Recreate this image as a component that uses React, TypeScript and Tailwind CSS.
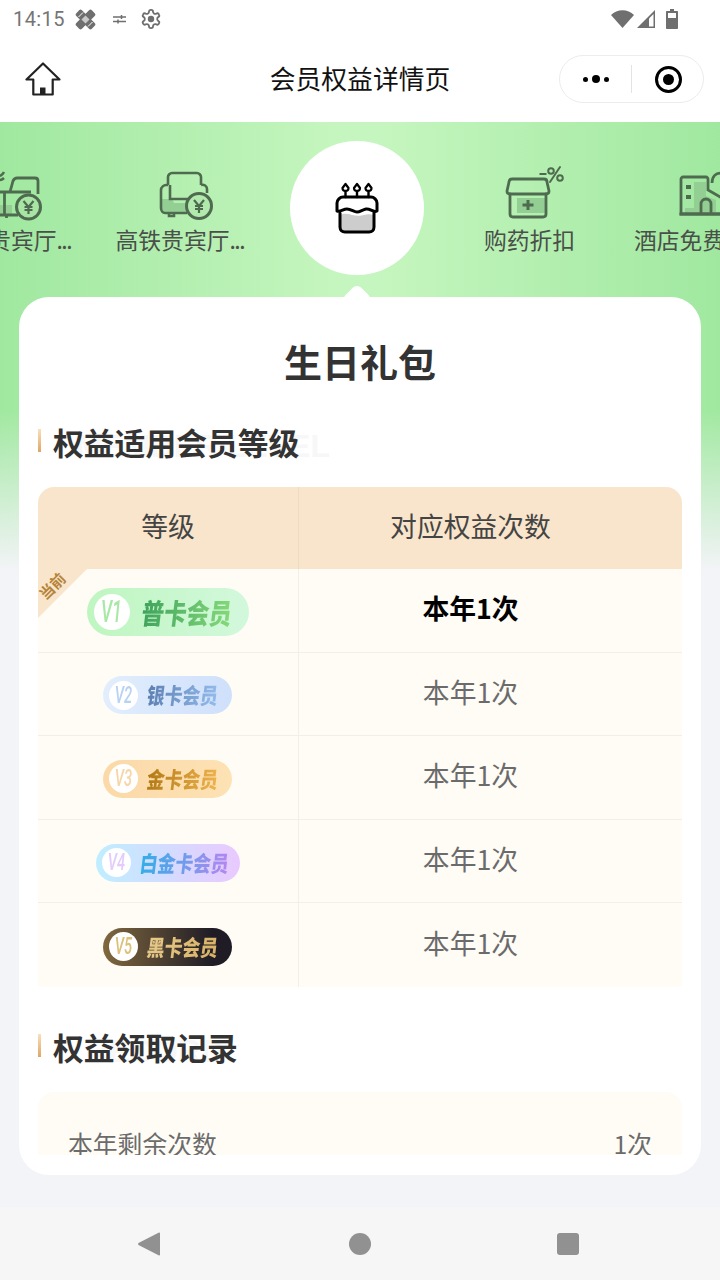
import React from "react";

const ICON_COLOR = "#4f6b4f";
const ICON_FILL = "#93cf93";

// all carousel icons share a 52px tall box, top edge at y=170 on the page
function PlaneSofaIcon() {
  return (
    <svg className="overflow-visible" width="54" height="52" viewBox="0 0 54 52" fill="none" stroke={ICON_COLOR} strokeWidth="2.8">
      <path d="M19 35h12v10H19z" fill={ICON_FILL} stroke="none" />
      <path d="M29 22l3-11c1-2 2-3 4-3h18c2 0 3 1 3 3v13" />
      <path d="M19 22h31M23.500 22v24M19 45h18M25.500 45v3" />
      <path d="M23 2c-1 2-2 3-4 4M23 8c-1 1-2 2-4 2" strokeWidth="2.6" />
      <circle cx="47.500" cy="37" r="12" fill="#a8e5a5" strokeWidth="3" />
      <path d="M42.500 31l5 6 5-6M47.500 37v7M43.500 37h8M43.500 40h8" strokeWidth="2.2" />
    </svg>
  );
}

function SofaCoinIcon() {
  return (
    <svg className="overflow-visible translate-x-[5px]" width="54" height="52" viewBox="0 0 54 52" fill="none" stroke={ICON_COLOR} strokeWidth="2.6">
      <path d="M3 29h10l2 4h16l-2 9H3z" fill={ICON_FILL} stroke="none" />
      <path d="M9 15V7c0-2 2-4 4-4h25c2 0 4 2 4 4v8" />
      <path d="M9 15H7c-2 0-5 2-5 5v18c0 3 2 5 4 5h22" />
      <path d="M42 15c3-1 6 1 6 4v4" />
      <path d="M11 15v14h20M10 43v3h5v-3" />
      <circle cx="40" cy="36" r="12.500" fill="#b2eaae" strokeWidth="3" />
      <path d="M35 30l5 6 5-6M40 36v7M36 36h8M36 39h8" strokeWidth="2.2" />
    </svg>
  );
}

function CakeIcon() {
  return (
    <svg width="46" height="52" viewBox="0 0 46 52" fill="none" stroke="#000" strokeWidth="3" strokeLinecap="round" strokeLinejoin="round">
      <path d="M6 33c4-2 8-1 12 0s9 1 12 0 6-1 10 0v12c0 3-2 5-5 5H11c-3 0-5-2-5-5z" fill="#cdcdcd" stroke="none" />
      <path d="M11.500 9v6M23 9v6M34.500 9v6" strokeWidth="2.4" />
      <path d="M11.500 2l3 4c0 2-1 3-3 3s-3-1-3-3zM23 2l3 4c0 2-1 3-3 3s-3-1-3-3zM34.500 2l3 4c0 2-1 3-3 3s-3-1-3-3z" strokeWidth="2.2" />
      <path d="M3 29v-8c0-3 3-6 6-6h28c3 0 6 3 6 6v8c-4 2-7-3-11-2s-6 3-9 3-6-3-10-3-6 3-10 2z" />
      <path d="M6 31v14c0 3 2 5 5 5h24c3 0 5-2 5-5V31" />
    </svg>
  );
}

function MedicineIcon() {
  return (
    <svg className="overflow-visible" width="60" height="52" viewBox="0 0 60 52" fill="none" stroke={ICON_COLOR} strokeWidth="2.8" strokeLinecap="round" strokeLinejoin="round">
      <path d="M17 28h28v15H17z" fill={ICON_FILL} stroke="none" />
      <path d="M12 9c-2 0-3 1-3 3l-2 9c0 2 1 3 3 3h36c2 0 3-1 3-3l-2-9c0-2-1-3-3-3z" />
      <path d="M10 24v20c0 2 1 3 3 3h30c2 0 3-1 3-3V24" />
      <path d="M28 30v10M22.500 35h11" strokeWidth="3" strokeLinecap="butt" />
      <path d="M39.500 4h7" strokeWidth="2" strokeLinecap="butt" />
      <circle cx="51" cy="1" r="2.800" strokeWidth="2" />
      <circle cx="60" cy="8" r="2.800" strokeWidth="2" />
      <path d="M60-3L50 12" strokeWidth="2" />
    </svg>
  );
}

function HotelIcon() {
  return (
    <svg className="overflow-visible" width="60" height="52" viewBox="0 0 60 52" fill="none" stroke={ICON_COLOR} strokeWidth="2.8">
      <path d="M21 38V12h12v14l10 4v14H12v-6z" fill={ICON_FILL} stroke="none" />
      <path d="M8 44V9c0-1 1-2 2-2h23c1 0 2 1 2 2v11l14 8v16z" />
      <path d="M6.500 44h44" />
      <path d="M28 44V34c0-3 2-5 5-5s5 2 5 5v10" />
      <path d="M39 13c0-7 4-10 9-10s9 3 9 8" />
      <path d="M13 17h5M13 27h5" strokeWidth="4" />
    </svg>
  );
}

function CarouselItem({
  icon,
  label,
  more,
  center,
  className = "",
}: {
  icon: React.ReactNode;
  label: string;
  more?: boolean;
  center?: boolean;
  className?: string;
}) {
  return (
    <div className={`w-[173px] shrink-0 flex flex-col items-center pt-[48px] ${className}`}>
      <div className="h-[52px]">{icon}</div>
      <div className={`mt-[1px] w-[130px] whitespace-nowrap text-[22.8px] leading-[34px] text-[#4a4f4a] ${center ? "text-center" : ""}`}>
        {label}
        {more && <span className="tracking-[-1.500px]">...</span>}
      </div>
    </div>
  );
}

type Level = {
  key: string;
  name: string;
  big?: boolean;
  pill: string;
  badge: string;
  text: string;
  width: string;
};

const levels: Level[] = [
  {
    key: "V1",
    name: "普卡会员",
    big: true,
    pill: "bg-[linear-gradient(90deg,#bff6c0,#d2f8dc)]",
    badge: "text-[#a9e8a4]",
    text: "bg-[linear-gradient(90deg,#3fa35d,#86d97a)]",
    width: "w-[162px]",
  },
  {
    key: "V2",
    name: "银卡会员",
    pill: "bg-[linear-gradient(90deg,#e2eefd,#cfe0fb)]",
    badge: "text-[#b7d2f3]",
    text: "bg-[linear-gradient(90deg,#5d80b2,#93bbec)]",
    width: "w-[129px]",
  },
  {
    key: "V3",
    name: "金卡会员",
    pill: "bg-[linear-gradient(90deg,#fbd9a8,#fde2b4)]",
    badge: "text-[#f7d5a6]",
    text: "bg-[linear-gradient(90deg,#b27a16,#eeb24e)]",
    width: "w-[129px]",
  },
  {
    key: "V4",
    name: "白金卡会员",
    pill: "bg-[linear-gradient(90deg,#bfeeff,#e9c9ff)]",
    badge: "text-[#e2ccfb]",
    text: "bg-[linear-gradient(90deg,#32aee8,#b387ef)]",
    width: "w-[144px]",
  },
  {
    key: "V5",
    name: "黑卡会员",
    pill: "bg-[linear-gradient(90deg,#80683e,#1f1c26_85%)]",
    badge: "text-[#dcc17c]",
    text: "bg-[linear-gradient(90deg,#e6c98a,#d8b266)]",
    width: "w-[129px]",
  },
];

function LevelPill({ level }: { level: Level }) {
  const big = level.big;
  return (
    <div className={`${level.width} ${big ? "h-[48px] pl-[7px] gap-[12px]" : "h-[38px] pl-[6px] gap-[9px]"} ${level.pill} rounded-full flex items-center`}>
      <div
        className={`${big ? "w-[36px] h-[36px]" : "w-[29px] h-[29px]"} ${level.badge} shrink-0 rounded-full bg-white flex items-center justify-center`}
      >
        <span
          className={`${big ? "text-[26px] [transform:scale(.68,1.2)]" : "text-[21px] [transform:scale(.7,1.15)]"} italic font-medium [font-family:Roboto,sans-serif]`}
        >
          {level.key}
        </span>
      </div>
      <span
        className={`${big ? "text-[22.5px]" : "text-[17.8px]"} ${level.text} bg-clip-text text-transparent font-black whitespace-nowrap leading-none [transform:skewX(-7deg)_scaleY(1.25)]`}
      >
        {level.name}
      </span>
    </div>
  );
}

function SectionTitle({ title, ghost, ghostWidth }: { title: string; ghost: string; ghostWidth: string }) {
  return (
    <div className="relative flex items-start gap-[12px] h-[40px] pl-[19px]">
      <div className="w-[3px] h-[23px] mt-[4px] bg-[linear-gradient(180deg,#f8e0bd,#dfa664)]" />
      <div className={`absolute left-[35px] top-[1px] ${ghostWidth} text-right text-[32px] leading-[40px] font-bold text-[#f7f7f7] whitespace-nowrap [font-family:'Liberation_Sans',sans-serif]`}>
        {ghost}
      </div>
      <h2 className="relative -mt-[3px] text-[30.8px] leading-[40px] font-bold text-[#333333]">{title}</h2>
    </div>
  );
}

export default function App() {
  return (
    <div className="w-[720px] h-[1280px] flex flex-col overflow-hidden bg-white [font-family:'Noto_Sans_CJK_SC','Noto_Sans',sans-serif]">
      {/* Status bar */}
      <div className="h-[38px] pl-[13px] pr-[42px] flex items-center text-[#757575] shrink-0">
        <span className="text-[20px] [font-family:Roboto,sans-serif] tracking-[0.4px]">14:15</span>
        <svg className="ml-[10px]" width="21" height="21" viewBox="0 0 21 21" fill="#6f6f6f">
          <rect x="-0.5" y="6.500" width="22" height="8" rx="2" transform="rotate(45 10.500 10.500)" />
          <rect x="-0.5" y="6.500" width="22" height="8" rx="2" transform="rotate(-45 10.500 10.500)" />
          <path d="M10.500 6.500l4 4-4 4-4-4z" fill="#c9c9c9" />
          <path d="M3.500 8l4.500-4.500M13 17.500L17.500 13" stroke="#fff" strokeWidth="1" />
        </svg>
        <svg className="ml-[17px]" width="13" height="10" viewBox="0 0 13 10" stroke="#6f6f6f" strokeWidth="1.500">
          <path d="M0 3h13M0 7.500h13" />
          <path d="M8.500 1v4M5 5.500v4" />
        </svg>
        <svg className="ml-[14px]" width="22" height="22" viewBox="0 0 24 24" fill="none" stroke="#6f6f6f" strokeWidth="2">
          <path d="M12.200 2h-.4a2 2 0 0 0-2 2v.2a2 2 0 0 1-1 1.700l-.4.3a2 2 0 0 1-2 0l-.2-.1a2 2 0 0 0-2.700.7l-.2.4a2 2 0 0 0 .7 2.700l.2.1a2 2 0 0 1 1 1.700v.6a2 2 0 0 1-1 1.700l-.2.1a2 2 0 0 0-.7 2.700l.2.4a2 2 0 0 0 2.700.7l.2-.1a2 2 0 0 1 2 0l.4.3a2 2 0 0 1 1 1.700v.2a2 2 0 0 0 2 2h.4a2 2 0 0 0 2-2v-.2a2 2 0 0 1 1-1.700l.4-.3a2 2 0 0 1 2 0l.2.1a2 2 0 0 0 2.700-.7l.2-.4a2 2 0 0 0-.7-2.700l-.2-.1a2 2 0 0 1-1-1.700v-.6a2 2 0 0 1 1-1.700l.2-.1a2 2 0 0 0 .7-2.700l-.2-.4a2 2 0 0 0-2.700-.7l-.2.1a2 2 0 0 1-2 0l-.4-.3a2 2 0 0 1-1-1.700V4a2 2 0 0 0-2-2z" />
          <circle cx="12" cy="12" r="3.500" fill="#6f6f6f" stroke="none" />
        </svg>
        <div className="ml-auto flex items-center">
          <svg width="23" height="18" viewBox="0 0 23 18" fill="#6f6f6f">
            <path d="M0 5c6-6.500 17-6.500 23 0L11.500 18z" />
          </svg>
          <svg className="ml-[3px]" width="18" height="18" viewBox="0 0 18 18" fill="none">
            <path d="M18 0v18H0z" fill="#6f6f6f" />
            <path d="M16.500 4v12.500H12V8.500z" fill="#fff" />
          </svg>
          <svg className="ml-[11px]" width="12" height="20" viewBox="0 0 12 20" fill="#6f6f6f">
            <path d="M4 0h4v2h3c.6 0 1 .4 1 1v16c0 .6-.4 1-1 1H1c-.6 0-1-.4-1-1V3c0-.6.4-1 1-1h3z" />
            <path d="M2 4h8v5H2z" fill="#fff" />
          </svg>
        </div>
      </div>

      {/* Nav bar */}
      <div className="relative h-[84px] shrink-0 flex items-center justify-between pl-[25px] pr-[16px] pb-[2px]">
        <svg width="36" height="34" viewBox="0 0 36 34" fill="none" stroke="#222" strokeWidth="2.200" strokeLinejoin="round">
          <path d="M18 1.500L1.500 17.500h6.800v15h19.400v-15h6.800z" />
          <path d="M15 32v-6.500h5.500V32" fill="#222" stroke="none" />
        </svg>
        <h1 className="absolute left-0 right-0 -mt-[2px] text-center text-[25.8px] font-normal text-[#111]">会员权益详情页</h1>
        <div className="relative w-[145px] h-[48px] rounded-full border border-[#ececec] bg-white flex items-center">
          <div className="w-[71px] flex items-center justify-center gap-[4px]">
            <span className="w-[5px] h-[5px] rounded-full bg-black" />
            <span className="w-[8px] h-[8px] rounded-full bg-black" />
            <span className="w-[5px] h-[5px] rounded-full bg-black" />
          </div>
          <div className="w-px h-[28px] bg-[#e3e3e3]" />
          <div className="flex-1 flex items-center justify-center pl-[2px]">
            <div className="w-[27px] h-[27px] rounded-full border-[3px] border-black flex items-center justify-center">
              <div className="w-[11px] h-[11px] rounded-full bg-black" />
            </div>
          </div>
        </div>
      </div>

      {/* Body */}
      <div className="relative flex-1 bg-[#f3f4f8] flex flex-col">
        <div className="absolute inset-x-0 top-0 h-[450px] bg-[linear-gradient(180deg,rgba(243,244,248,0)_64%,#f3f4f8_100%),linear-gradient(90deg,#a0e8a0_0%,#c6f6bf_48%,#c6f6bf_52%,#a0e8a0_100%)]" />

        {/* Carousel */}
        <div className="relative h-[175px] flex overflow-hidden">
          <CarouselItem icon={<PlaneSofaIcon />} label="机场贵宾厅" more className="-ml-[79px]" />
          <CarouselItem icon={<SofaCoinIcon />} label="高铁贵宾厅" more />
          <div className="ml-[23px] mt-[19px] w-[134px] h-[134px] shrink-0 rounded-full bg-white flex items-center justify-center">
            <CakeIcon />
          </div>
          <CarouselItem icon={<MedicineIcon />} label="购药折扣" center className="ml-[19px]" />
          <CarouselItem icon={<HotelIcon />} label="酒店免费早餐" more className="[&>div:last-child]:-ml-[7px]" />
        </div>

        {/* Card */}
        <div className="relative mx-[19px] h-[878px] rounded-[30px] bg-white">
          <div className="absolute left-[327px] -top-[9px] w-[22px] h-[22px] rotate-45 rounded-[6px] bg-white" />
          <div className="relative h-[858px] overflow-hidden">
            <h1 className="pt-[36px] text-center text-[38px] leading-[56px] font-bold text-[#333333]">生日礼包</h1>
            <div className="mt-[36px]">
              <SectionTitle title="权益适用会员等级" ghost="MEMBER LEVEL" ghostWidth="w-[276px]" />
            </div>

            {/* Level table */}
            <div className="mt-[22px] mx-[19px] rounded-t-[16px] rounded-b-[4px] overflow-hidden bg-[#fffcf6]">
              <div className="grid grid-cols-[261px_1fr] h-[82px] bg-[#f9e5cb] text-[26.8px] text-[#444]">
                <div className="flex items-center justify-center border-r border-[#eddcc4] pb-[4px]">等级</div>
                <div className="flex items-center justify-center pb-[4px] pr-[40px]">对应权益次数</div>
              </div>
              {levels.map((level, i) => (
                <div
                  key={level.key}
                  className={`relative grid grid-cols-[261px_1fr] h-[83.6px] ${i < levels.length - 1 ? "border-b border-[#f3eee6]" : ""}`}
                >
                  {i === 0 && (
                    <div className="absolute left-0 top-0 w-[49px] h-[49px]">
                      <div className="absolute inset-0 bg-[#f9e5cb] [clip-path:polygon(0_0,100%_0,0_100%)]" />
                      <span className="absolute left-[-1px] top-[8px] -rotate-45 text-[15px] leading-[18px] font-bold text-[#b5843a] whitespace-nowrap">
                        当前
                      </span>
                    </div>
                  )}
                  <div className="flex items-center justify-center border-r border-[#f3eee6] pt-[3px] pr-[1px]">
                    <LevelPill level={level} />
                  </div>
                  <div
                    className={`flex items-center justify-center pb-[4px] pr-[40px] text-[26.8px] ${i === 0 ? "font-bold text-black" : "text-[#6b6b6b]"}`}
                  >
                    本年1次
                  </div>
                </div>
              ))}
            </div>

            <div className="mt-[43px]">
              <SectionTitle title="权益领取记录" ghost="RECORD" ghostWidth="w-[170px]" />
            </div>

            {/* Record */}
            <div className="mt-[22px] mx-[19px] rounded-t-[16px] bg-[#fffcf6] h-[200px] px-[30px] pt-[33px]">
              <div className="flex justify-between text-[24.8px] leading-[36px] text-[#6b6b6b]">
                <span>本年剩余次数</span>
                <span>1次</span>
              </div>
            </div>
          </div>
        </div>
      </div>

      {/* Android nav */}
      <div className="h-[73px] shrink-0 bg-[#f6f6f6] flex items-center pl-[138px]">
        <svg width="22" height="24" viewBox="0 0 22 24" fill="#919191">
          <path d="M21 .5c.5 0 1 .4 1 1v21c0 .6-.5 1-1 1L.5 13c-.6-.5-.6-1.500 0-2z" />
        </svg>
        <div className="ml-[189px] w-[22px] h-[22px] rounded-full bg-[#919191]" />
        <div className="ml-[186px] w-[22px] h-[22px] rounded-[3px] bg-[#919191]" />
      </div>
    </div>
  );
}
